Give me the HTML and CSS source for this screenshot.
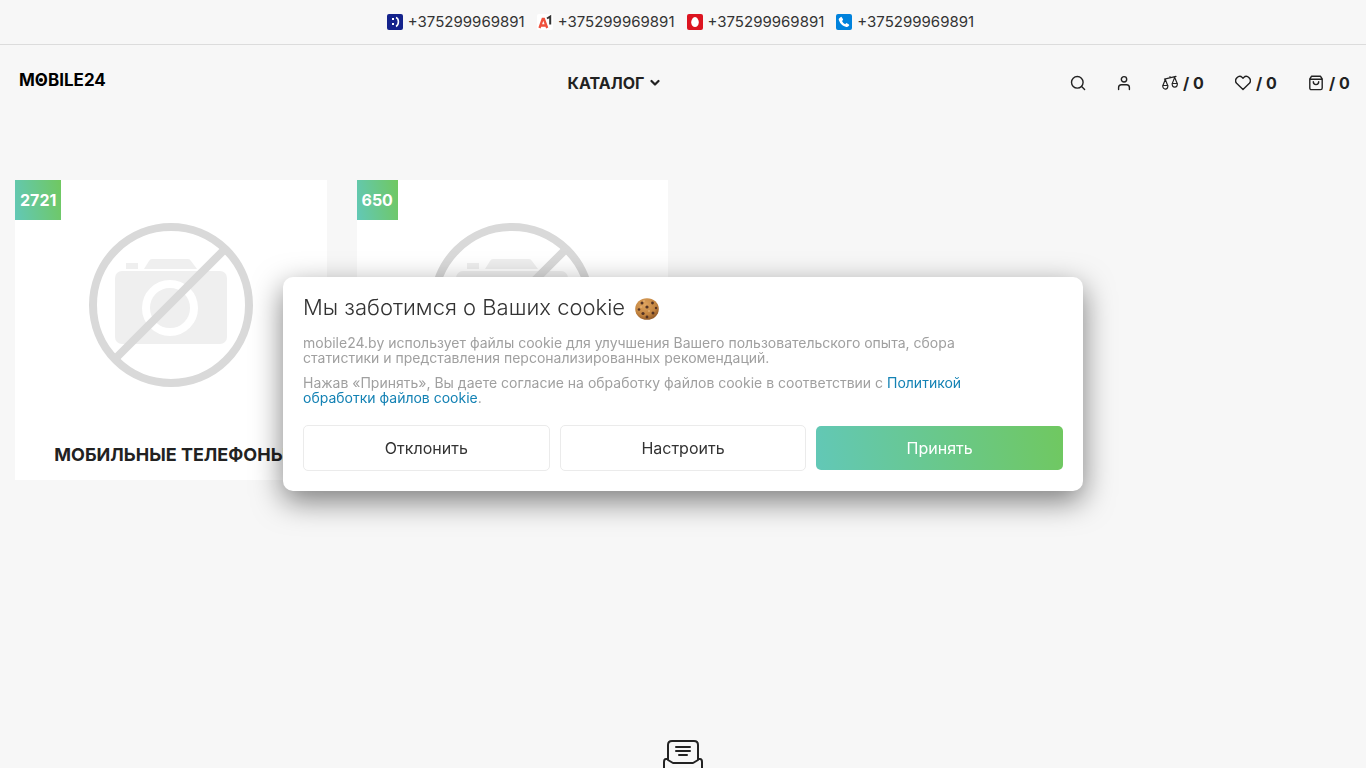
FILE: index.html
```html
<!DOCTYPE html>
<html lang="ru">
<head>
<meta charset="utf-8">
<meta name="viewport" content="width=device-width, initial-scale=1">
<title>MOBILE24</title>
<link rel="stylesheet" href="styles.css">
</head>
<body>
<svg class="sprite" aria-hidden="true">
  <symbol id="no-photo" viewBox="0 0 164 164">
    <g fill="#efefef">
      <rect x="26" y="48" width="112" height="73" rx="7"/>
      <path d="M37 40h12v6H37zM55 46l5-8q1-2 3-2h36q2 0 3 2l6 8z"/>
    </g>
    <circle cx="81" cy="85" r="24" fill="#efefef" stroke="#fff" stroke-width="8"/>
    <g fill="none" stroke="#d9d9d9" stroke-width="8">
      <circle cx="82" cy="82" r="78"/>
      <path d="M136 26 27 135"/>
    </g>
  </symbol>
</svg>
<div class="page">
  <div class="topbar">
    <a class="phone" href="tel:+375299969891">
      <svg class="icon" viewBox="0 0 16 16"><rect width="16" height="16" rx="2" fill="#14238c"/><path d="M5 4h2v2H5zM5 9h2v2H5z" fill="#fff"/><path d="M9 3.500q2.400.8 2.400 4.300T9 12.400" fill="none" stroke="#fff" stroke-width="1.600"/></svg>
      <span>+375299969891</span>
    </a>
    <a class="phone" href="tel:+375299969891">
      <svg class="icon" viewBox="0 0 16 16"><rect width="16" height="16" rx="2" fill="#fff"/><path d="M2.500 14 5.700 5h1.200l3.300 9M3.800 11.500h5" fill="none" stroke="#f0503c" stroke-width="2.300"/><path d="M10 4.500 13.200 2.500v8" fill="none" stroke="#333" stroke-width="2"/></svg>
      <span>+375299969891</span>
    </a>
    <a class="phone" href="tel:+375299969891">
      <svg class="icon" viewBox="0 0 16 16"><rect width="16" height="16" rx="2" fill="#dc1420"/><path d="M8 3c2 0 3.800 3 3.800 5.500S10 13 8 13s-3.800-2-3.800-4.500S6 3 8 3z" fill="#fff"/></svg>
      <span>+375299969891</span>
    </a>
    <a class="phone" href="tel:+375299969891">
      <svg class="icon" viewBox="0 0 16 16"><rect width="16" height="16" rx="2" fill="#0082dc"/><path d="M3 4.500 4.800 3q.6-.4 1 .2L7 5.300q.3.600-.2 1l-.8.600Q7 9 9.200 10.200l.7-.8q.5-.5 1-.2l2 1.200q.6.400.2 1l-1 1.200q-.6.700-1.800.4Q4.700 11.500 2.800 6q-.3-1 .2-1.500z" fill="#fff"/></svg>
      <span>+375299969891</span>
    </a>
  </div>

  <header class="header">
    <a class="logo" href="#">M<span class="logo-o">O</span>BILE24</a>
    <nav class="nav">
      <button class="catalog" type="button">КАТАЛОГ
        <svg class="chevron" viewBox="0 0 10 8"><path d="m1.500 2 3.500 3.500L8.500 2" fill="none" stroke="currentColor" stroke-width="2.200" stroke-linecap="round" stroke-linejoin="round"/></svg>
      </button>
    </nav>
    <div class="actions">
      <button class="action" type="button" aria-label="Поиск">
        <svg class="icon line" viewBox="0 0 16 16"><circle cx="7.300" cy="7.300" r="5.800"/><path d="m11.600 11.600 3 3"/></svg>
      </button>
      <a class="action" href="#" aria-label="Профиль">
        <svg class="icon line" viewBox="0 0 16 16"><circle cx="8" cy="4.300" r="2.700"/><path d="M2.600 14.500v-2c0-1.700 1.200-2.800 2.800-2.800h5.200c1.600 0 2.800 1.100 2.800 2.800v2"/></svg>
      </a>
      <a class="action" href="#" aria-label="Сравнение">
        <svg class="icon line thin" viewBox="0 0 16 16"><path d="M2.500 4.200 14 1.400M8 2.900V1.600M3.300 4.500.9 10.500M3.300 4.500l2.400 6M.7 10.500h5.200c0 4.800-5.200 4.800-5.200 0zM12.700 2.400l-2.400 6M12.700 2.400l2.500 6M10.100 8.500h5.300c0 4.800-5.300 4.800-5.300 0z"/></svg>
        <span class="count">/ 0</span>
      </a>
      <a class="action" href="#" aria-label="Избранное">
        <svg class="icon line" viewBox="0 0 16 16"><path d="M8 14.600 1.600 8.200C-1.400 4.800 3.600-.8 7.300 2.500l.7.700.7-.7c3.700-3.300 8.700 2.300 5.700 5.700z"/></svg>
        <span class="count">/ 0</span>
      </a>
      <a class="action" href="#" aria-label="Корзина">
        <svg class="icon line" viewBox="0 0 16 16"><path d="M1.800 4 3.600 1.200h8.800L14.200 4v9c0 1-.6 1.600-1.600 1.600H3.400c-1 0-1.600-.6-1.600-1.600zM1.800 4.300h12.400M5.300 6.800c0 3.700 5.400 3.700 5.400 0"/></svg>
        <span class="count">/ 0</span>
      </a>
    </div>
  </header>

  <main class="grid">
    <a class="card" href="#">
      <span class="badge">2721</span>
      <svg class="photo"><use href="#no-photo"/></svg>
      <span class="card-title">МОБИЛЬНЫЕ ТЕЛЕФОНЫ</span>
    </a>
    <a class="card" href="#">
      <span class="badge">650</span>
      <svg class="photo"><use href="#no-photo"/></svg>
    </a>
  </main>

  <section class="subscribe">
    <svg class="letter" viewBox="0 0 40 40" fill="none" stroke="#222" stroke-width="2" stroke-linecap="round" stroke-linejoin="round"><path d="M5 20V5q0-4 4-4h22q4 0 4 4v15l-5 3H10zM5 19H3q-2 0-2 3v17h38V22q0-3-2-3h-2M13 7h14M13 11h14M16 15h8"/></svg>
  </section>
</div>

<div class="cookie" role="dialog" aria-labelledby="cookie-title">
  <h2 class="cookie-title" id="cookie-title">Мы заботимся о Ваших cookie
    <svg class="biscuit" viewBox="0 0 24 22">
      <defs><radialGradient id="dough" cx=".4" cy=".3" r=".75"><stop offset="0" stop-color="#dfa45f"/><stop offset=".65" stop-color="#c28440"/><stop offset="1" stop-color="#8c5424"/></radialGradient></defs>
      <ellipse cx="12" cy="11" rx="11.800" ry="10.800" fill="url(#dough)"/>
      <g fill="#553424"><circle cx="7" cy="5" r="1.500"/><circle cx="17.500" cy="5" r="1.400"/><circle cx="12" cy="9" r="1.600"/><circle cx="4" cy="11.500" r="1.300"/><circle cx="8" cy="15.500" r="1.600"/><circle cx="18" cy="15" r="1.500"/><circle cx="12" cy="19" r="1.400"/><circle cx="21" cy="10" r="1.200"/></g>
      <g fill="#f0c48c"><circle cx="9" cy="3" r=".7"/><circle cx="14" cy="13" r=".8"/><circle cx="6" cy="9" r=".7"/></g>
    </svg>
  </h2>
  <p class="cookie-text">mobile24.by использует файлы cookie для улучшения Вашего пользовательского опыта, сбора<br>статистики и представления персонализированных рекомендаций.</p>
  <p class="cookie-text">Нажав «Принять», Вы даете согласие на обработку файлов cookie в соответствии с <a class="policy" href="#">Политикой<br>обработки файлов cookie</a>.</p>
  <div class="choices">
    <button class="choice" type="button">Отклонить</button>
    <button class="choice" type="button">Настроить</button>
    <button class="choice accept" type="button">Принять</button>
  </div>
</div>
</body>
</html>
```
FILE: styles.css
```css
* { box-sizing: border-box; }

body {
  margin: 0;
  background: #f7f7f7;
  color: #222;
  font-family: Inter, "Open Sans", sans-serif;
  font-size: 15px;
}

a { color: inherit; text-decoration: none; }
button { margin: 0; border: 0; padding: 0; background: none; color: inherit; font: inherit; cursor: pointer; }
svg { flex: none; display: block; }

.sprite { position: absolute; width: 0; height: 0; }

.page { height: 100vh; overflow: hidden; }

.topbar {
  display: flex;
  justify-content: center;
  gap: 12px;
  padding: 12px 20px 12px 15px;
  border-bottom: 1px solid #dcdcdc;
  line-height: 20px;
}
.phone { display: flex; align-items: center; gap: 5px; color: #333; }
.icon { width: 16px; height: 16px; }
.line { fill: none; stroke: #222; stroke-width: 1.4; stroke-linecap: round; stroke-linejoin: round; }
.thin { stroke-width: 1.2; }

.header { display: flex; align-items: center; padding: 25px 15px; font-weight: 700; line-height: 20px; }
.logo { flex: 0 0 143px; padding: 0 4px 6px; color: #000; font-size: 17px; }
.logo-o { position: relative; }
.logo-o::after {
  content: "";
  position: absolute;
  inset: 0;
  width: 4px;
  height: 4px;
  margin: auto;
  border-radius: 50%;
  background: #000;
}
.nav { flex: 1; display: flex; justify-content: center; }
.catalog { display: flex; align-items: center; gap: 6px; font-size: 16px; font-weight: 700; }
.chevron { width: 10px; height: 8px; }
.actions { display: flex; gap: 30px; font-size: 16px; }
.action { display: flex; align-items: center; gap: 5px; }
.count { min-width: 22px; }

.grid {
  display: grid;
  grid-template-columns: repeat(4, 1fr);
  gap: 30px;
  padding: 59px 15px 0;
}
.card {
  position: relative;
  display: flex;
  flex-direction: column;
  align-items: center;
  height: 300px;
  padding: 43px 10px 15px;
  background: #fff;
}
.photo { width: 164px; height: 164px; }
.card-title { margin-top: auto; font-size: 18px; font-weight: 700; line-height: 20px; white-space: nowrap; }
.badge {
  position: absolute;
  top: 0;
  left: 0;
  padding: 0 5px;
  background: linear-gradient(80deg, #62c8b7, #70c860);
  color: #fff;
  font-size: 16px;
  font-weight: 700;
  line-height: 40px;
}

.subscribe { display: flex; justify-content: center; padding-top: 260px; }
.letter { width: 40px; height: 40px; }

.cookie {
  position: fixed;
  inset: 0;
  width: 800px;
  max-width: 100%;
  height: fit-content;
  margin: auto;
  padding: 17px 20px 20px;
  border-radius: 10px;
  background: #fff;
  box-shadow: 0 10px 30px rgba(0, 0, 0, .5);
}
.cookie-title {
  display: flex;
  align-items: center;
  gap: 10px;
  margin: 0 0 15px;
  color: #333;
  font-size: 22px;
  font-weight: 300;
  line-height: 26px;
}
.biscuit { width: 24px; height: 22px; margin-top: 4px; }
.cookie-text { margin: 0 0 10px; color: #a0a0a0; font-size: 14px; line-height: 15px; }
.policy { color: #1482b4; }
.choices { display: grid; grid-template-columns: repeat(3, 1fr); align-items: center; gap: 10px; margin-top: 20px; }
.choice {
  height: 46px;
  border: 1px solid #ebebeb;
  border-radius: 5px;
  color: #333;
  font-size: 16px;
}
.accept { height: 44px; border: 0; background: linear-gradient(80deg, #62c8b7, #70c860); color: #fff; }
```
